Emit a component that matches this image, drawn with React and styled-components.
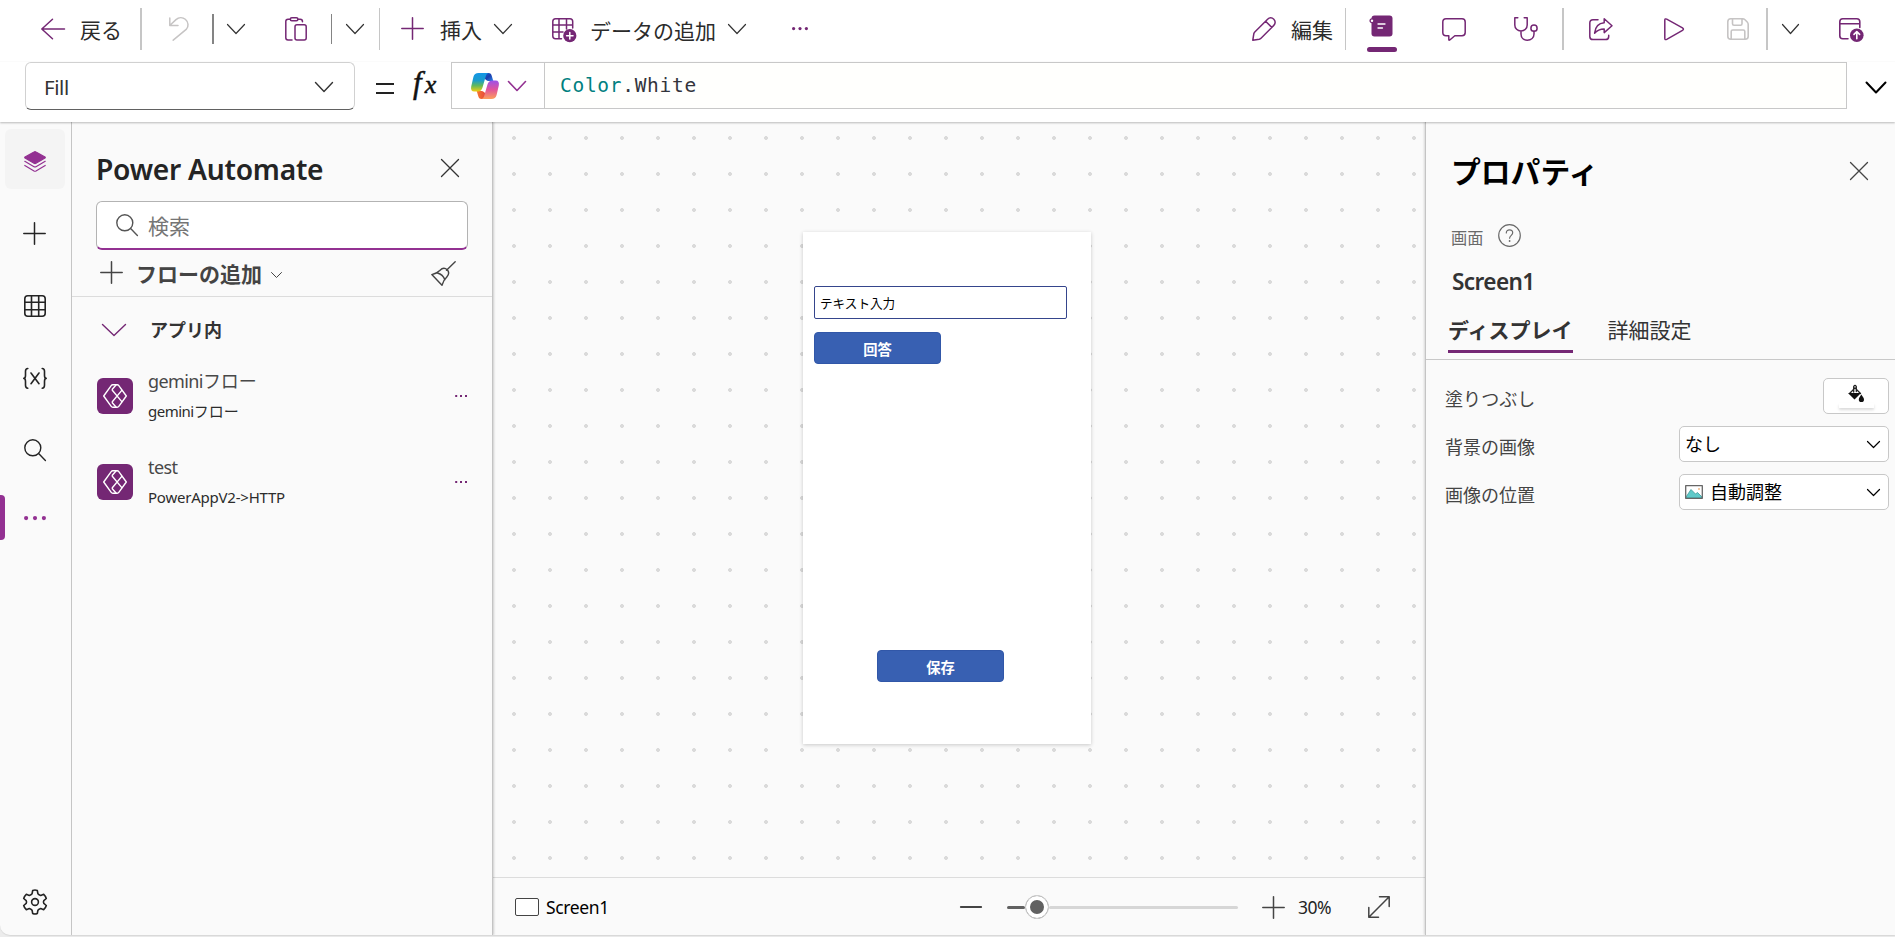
import React, { useState } from 'react'
import styled, { createGlobalStyle, css } from 'styled-components'

const purple = '#742774'
const brightPurple = '#933192'

const GlobalStyle = createGlobalStyle`
  * { box-sizing: border-box; }
  body {
    margin: 0;
    background: #ececec;
    font-family: 'Noto Sans', 'Noto Sans CJK JP', sans-serif;
    color: #242424;
  }
  button, input { font-family: inherit; color: inherit; }
`

///// LAYOUT /////

const Page = styled.div`
  width: 1895px;
  height: 937px;
  overflow: hidden;
  display: flex;
  flex-direction: column;
`

const Header = styled.header`
  position: relative;
  z-index: 2;
  flex: none;
  height: 122px;
  background: #fff;
  box-shadow: 0 1px 2px rgba(0, 0, 0, 0.26);
`

const Toolbar = styled.div`
  display: flex;
  height: 62px;
  border-bottom: 1px solid #fbfbfb;
`

const FormulaRow = styled.div`
  display: flex;
  height: 60px;
  padding-left: 25px;
`

const Body = styled.div`
  flex: none;
  height: 813px;
  display: flex;
  background: #fafafa;
  border-bottom-left-radius: 10px;
  overflow: hidden;
  box-shadow: 0 1px 1px #d8d8d8;
`

///// TOOLBAR PARTS /////

const Svg = styled.svg`
  display: block;
  flex: none;
  fill: none;
  stroke: currentColor;
  stroke-width: ${pr => pr.$stroke || 1.3};
  stroke-linecap: round;
  stroke-linejoin: round;
  overflow: visible;
`

const Tool = styled.button`
  display: flex;
  align-items: flex-start;
  height: 61px;
  padding: ${pr => pr.$top || 17}px 0 0;
  margin: 0 0 0 ${pr => pr.$gap || 0}px;
  border: 0;
  background: none;
  flex: none;
  color: ${pr => (pr.$disabled ? '#c6c4c4' : pr.$dark ? '#333' : purple)};
`

const ToolText = styled.span`
  width: ${pr => pr.$width}px;
  margin-left: ${pr => pr.$gap}px;
  margin-top: -3px;
  font-family: 'Noto Sans CJK JP', sans-serif;
  font-size: 21px;
  line-height: 30px;
  white-space: nowrap;
  text-align: left;
  color: #2b2b2b;
`

const Divider = styled.i`
  flex: none;
  width: ${pr => pr.$thick || 1}px;
  height: ${pr => (pr.$short ? 30 : 42)}px;
  margin: ${pr => (pr.$short ? 14 : 8)}px 0 0 ${pr => pr.$gap}px;
  background: ${pr => (pr.$short ? '#848484' : '#c6c6c6')};
`

const ActiveTool = styled.div`
  flex: none;
  width: 30px;
  height: 37px;
  margin: 15px 0 0 21px;
  padding-left: 3px;
  color: ${purple};

  &::after {
    content: '';
    display: block;
    height: 5px;
    margin: 10px 0 0 -3px;
    border-radius: 2.5px;
    background: ${purple};
  }
`

///// FORMULA BAR PARTS /////

const PropertySelect = styled.div`
  display: flex;
  align-items: center;
  justify-content: space-between;
  width: 330px;
  height: 48px;
  padding: 2px 21px 0 18px;
  border: 1px solid #d1d1d1;
  border-bottom-color: #616161;
  border-radius: 6px;
  font-size: 20.4px;
  letter-spacing: -0.4px;
  color: #333;
`

const Equals = styled.div`
  width: 18px;
  height: 11px;
  margin: 21px 0 0 21px;
  border-top: 2.5px solid #222;
  border-bottom: 2.5px solid #222;
`

const Fx = styled.div`
  width: 38px;
  margin-left: 19px;
  font: italic 31px/32px 'Liberation Serif', serif;
  padding-top: 5px;
  color: #111;
  white-space: nowrap;
  -webkit-text-stroke: 0.5px #111;

  span { font-size: 26px; margin-left: 3px; }
`

const CopilotButton = styled.div`
  display: flex;
  align-items: center;
  width: 94px;
  height: 47px;
  padding-left: 19px;
  border: 1px solid #c8c8c8;
  color: ${brightPurple};
`

const FormulaInput = styled.div`
  width: 1303px;
  height: 47px;
  margin-left: -1px;
  padding: 8px 0 0 15px;
  border: 1px solid #c8c8c8;
  background: #fffffd;
  font: 19.5px/30px 'DejaVu Sans Mono', monospace;
  letter-spacing: 0.7px;
  white-space: pre;
  color: #33343c;

  b { font-weight: normal; color: #008080; }
`

const Expand = styled.div`
  padding: 20px 0 0 19px;
  color: #000;
`

///// LEFT RAIL /////

const Rail = styled.nav`
  display: flex;
  flex-direction: column;
  flex: none;
  width: 72px;
  padding: 7px 0 0 5px;
  border-right: 1px solid #c8c8c8;
`

const RailItem = styled.div`
  position: relative;
  display: flex;
  align-items: center;
  justify-content: center;
  width: 60px;
  height: 60px;
  margin-bottom: 12px;
  padding: ${pr => (pr.$raised ? '0 0 2px' : pr.$nudge ? '4px 1px 0 0' : '6px 0 0')};
  border-radius: 6px;
  color: ${pr => (pr.$active ? brightPurple : '#242424')};
  ${pr => pr.$selected && css`background: #f4f4f4;`}
  ${pr => pr.$bottom && css`margin: auto 0 0; height: 66px; padding: 0;`}
`

const Marker = styled.span`
  position: absolute;
  left: -5px;
  top: 6px;
  width: 5px;
  height: 45px;
  border-radius: 0 4px 4px 0;
  background: ${brightPurple};
`

///// FLOW PANEL /////

const FlowPanel = styled.section`
  flex: none;
  width: 421px;
  border-right: 1px solid #c4c4c4;
  position: relative;
  z-index: 1;
  box-shadow: 1px 0 2px rgba(0, 0, 0, 0.18);
`

const PanelHead = styled.div`
  display: flex;
  justify-content: space-between;
  height: 79px;
  padding: 37px 33px 0 24px;
  color: #333;
`

const PanelTitle = styled.h2`
  margin: -11px 0 0;
  font-size: 28.2px;
  line-height: 42px;
  font-weight: 600;
  letter-spacing: -0.25px;
  color: #242424;
  white-space: nowrap;
`

const SearchBox = styled.div`
  display: flex;
  align-items: center;
  width: 372px;
  height: 49px;
  margin: 0 0 -1px 24px;
  padding-left: 19px;
  background: #fff;
  border: 1px solid #b3b3b3;
  border-bottom: 2px solid ${brightPurple};
  border-radius: 6px;
  color: #555;

  input {
    width: 300px;
    margin-left: 10px;
    padding: 0;
    border: 0;
    outline: 0;
    background: none;
    font: 21px 'Noto Sans CJK JP', sans-serif;
  }
  input::placeholder { color: #757575; opacity: 1; }
`

const AddFlow = styled.div`
  display: flex;
  align-items: center;
  height: 48px;
  padding: 0 36px 0 28px;
  border-bottom: 1px solid #dcdcdc;
  color: #444;

  strong {
    margin: 1px 0 0 13px;
    font-family: 'Noto Sans CJK JP', sans-serif;
    font-size: 21px;
    font-weight: 600;
    letter-spacing: 0;
  }
  svg:nth-of-type(2) { margin: 5px 0 0 9px; }
  svg:last-child { margin: 1px 0 0 auto; }
`

const GroupHead = styled.div`
  display: flex;
  align-items: center;
  height: 65px;
  padding: 0 0 0 30px;
  color: ${purple};

  strong {
    margin: -1px 0 0 24px;
    font-family: 'Noto Sans CJK JP', sans-serif;
    font-size: 18px;
    font-weight: 600;
    color: #333;
  }
`

const FlowItem = styled.div`
  display: flex;
  height: 86px;
  padding: 16px 25px 0;
  color: ${purple};
`

const FlowLogo = styled.div`
  display: flex;
  align-items: center;
  justify-content: center;
  width: 36px;
  height: 36px;
  border-radius: 6px;
  background: ${purple};
  color: #fff;
`

const FlowText = styled.div`
  flex: 1;
  margin: -10px 0 0 15px;
  white-space: nowrap;

  p { margin: 0; }
  p:first-child { font-size: 18px; line-height: 26px; color: #484848; }
  p:last-child { margin-top: 4px; font-size: 15px; line-height: 26px; color: #2c2c2c; }
`

const Latin = styled.span`
  letter-spacing: ${pr => pr.$track}px;
`

///// CANVAS /////

const Center = styled.main`
  display: flex;
  flex-direction: column;
  flex: none;
  width: 932px;
`

const Canvas = styled.div`
  position: relative;
  height: 755px;
  background-image: radial-gradient(circle, #dadada 1.7px, transparent 2.2px);
  background-size: 36px 36px;
  background-position: 3px -2px;
`

const AppScreen = styled.div`
  position: absolute;
  left: 310px;
  top: 110px;
  width: 288px;
  height: 512px;
  background: #fff;
  box-shadow: 0 1px 4px rgba(0, 0, 0, 0.2);
`

const AppInput = styled.div`
  position: absolute;
  left: 11px;
  top: 54px;
  width: 253px;
  height: 33px;
  padding-left: 5px;
  border: 1px solid #35458c;
  border-radius: 2px;
  font: 12.6px/31px 'Noto Sans CJK JP', sans-serif;
  color: #000;
`

const AppButton = styled.button`
  position: absolute;
  left: ${pr => pr.$x}px;
  top: ${pr => pr.$y}px;
  width: 127px;
  height: 32px;
  padding: ${pr => pr.$pad || 1}px 0 0;
  border: 1px solid #3157a8;
  border-radius: 4px;
  background: #3860b2;
  color: #fff;
  font: bold 14.3px/28px 'Noto Sans CJK JP', sans-serif;
`

const StatusBar = styled.div`
  display: flex;
  align-items: center;
  height: 58px;
  padding: 1px 0 0 22px;
  border-top: 1px solid #dcdcdc;
  font-size: 17.5px;
  color: #444;
`

const ScreenThumb = styled.span`
  width: 24px;
  height: 18px;
  border: 1.5px solid #444;
  border-radius: 2px;
  background: #fff;
`

const ScreenName = styled.span`
  width: 414px;
  margin-left: 7px;
  letter-spacing: -0.35px;
  color: #000;
`

const Slider = styled.div`
  display: flex;
  align-items: center;
  width: 231px;
  height: 24px;
  margin: 0 24px 0 25px;
`

const Track = styled.i`
  height: 3px;
  border-radius: 2px;
  background: ${pr => (pr.$done ? '#616161' : '#d6d6d6')};
  flex: ${pr => (pr.$done ? '0 0 18px' : '1')};
`

const Thumb = styled.i`
  width: 24px;
  height: 24px;
  border: 1px solid #d1d1d1;
  border-radius: 50%;
  background: #616161;
  box-shadow: inset 0 0 0 4px #fff;
`

const Percent = styled.span`
  width: 70px;
  margin-left: 13px;
  letter-spacing: -0.5px;
  color: #242424;
`

///// PROPERTIES PANEL /////

const Properties = styled.aside`
  flex: 1;
  border-left: 1px solid #c4c4c4;
  position: relative;
  z-index: 1;
  box-shadow: -1px 0 2px rgba(0, 0, 0, 0.14);
  font-family: 'Noto Sans CJK JP', sans-serif;
`

const PropsHead = styled.div`
  display: flex;
  justify-content: space-between;
  height: 98px;
  padding: 40px 27px 0 25px;
  color: #444;

  h2 {
    margin: -14px 0 0;
    font-size: 29.8px;
    line-height: 44px;
    font-weight: 700;
    color: #000;
  }
`

const ControlType = styled.div`
  display: flex;
  align-items: center;
  height: 30px;
  padding-left: 25px;
  font-size: 16.2px;
  color: #6a6a6a;

  span { margin: 4px 15px 0 0; }
`

const ControlName = styled.div`
  height: 55px;
  padding: 15px 0 0 26px;
  font: 600 22.6px/34px 'Noto Sans', sans-serif;
  letter-spacing: -0.6px;
  color: #333;
`

const Tabs = styled.div`
  display: flex;
  height: 55px;
  padding-left: 22px;
  border-bottom: 1px solid #c8c8c8;
`

const Tab = styled.div`
  height: 48px;
  margin-right: 35px;
  padding-top: 10px;
  font-size: 21px;
  line-height: 29px;
  font-weight: ${pr => (pr.$active ? 600 : 400)};
  border-bottom: 3px solid ${pr => (pr.$active ? purple : 'transparent')};
  color: #333;
`

const PropertyList = styled.div`
  padding: 18px 6px 0 19px;
`

const PropertyRow = styled.div`
  display: flex;
  justify-content: space-between;
  height: 48px;
  font-size: 18px;
  line-height: 26px;
  color: #444;

  > span { padding-top: 7px; }
`

const Dropdown = styled.div`
  display: flex;
  align-items: center;
  width: 210px;
  height: 36px;
  padding: 0 8px 0 5px;
  border: 1px solid #c8c8c8;
  border-radius: 5px;
  background: #fff;
  color: #000;

  span { margin: -3px auto 0 0; }
  svg + span { margin-left: 7px; }
`

const FillButton = styled.div`
  display: flex;
  flex-direction: column;
  align-items: center;
  width: 66px;
  height: 36px;
  padding-top: 5px;
  border: 1px solid #c8c8c8;
  border-radius: 5px;
  background: #fff;
`

const Swatch = styled.i`
  width: 35px;
  height: 5px;
  margin-top: 1px;
  background: #fff;
  box-shadow: 0 2px 3px rgba(0, 0, 0, 0.15);
`

///// ICONS /////

const Chevron = ({ w = 17, h = 9, stroke = 1.2 }) => (
  <Svg width={w} height={h} $stroke={stroke}>
    <path d={`M.5 .5L${w / 2} ${h - 0.5}L${w - 0.5} .5`} />
  </Svg>
)

const Plus = () => (
  <Svg width="23" height="23" $stroke={1.5}><path d="M11.5 .8V22.2M.8 11.5H22.2" /></Svg>
)

const Close = () => (
  <Svg width="18" height="18" $stroke={1.3}><path d="M.5 .5L17.5 17.5M17.5 .5L.5 17.5" /></Svg>
)

const Search = () => (
  <Svg width="22" height="22" $stroke={1.4}>
    <circle cx="8.8" cy="8.8" r="8" /><path d="M14.6 14.6L21.4 21.4" />
  </Svg>
)

const Dots = ({ w = 14, r = 1.5 }) => (
  <Svg width={w} height={r * 2}>
    {[r, w / 2, w - r].map(x => (
      <circle key={x} cx={x} cy={r} r={r} fill="currentColor" stroke="none" />
    ))}
  </Svg>
)

const AutomateLogo = () => (
  <Svg width="24" height="24" $stroke={1.4}>
    <path d="M10.5 .8H9.8Q8.8 .8 8.2 1.6L.7 12L8.2 22.4Q8.8 23.2 9.8 23.2H14.2Q15.2 23.2 15.8 22.4L23.3 12L15.8 1.6Q15.2 .8 14.2 .8H10.5" />
    <path d="M13 1L9.3 5.2V6.2L18.8 17.6M13 23L9.3 18.8V17.8L18.8 6.4" />
  </Svg>
)

const Copilot = () => (
  <Svg width="28" height="26" viewBox="0 0 28 26">
    <defs>
      <linearGradient id="cpBlue" x1="0" y1="0" x2="0" y2="1">
        <stop offset="0" stopColor="#1496e6" /><stop offset=".4" stopColor="#1a9ccd" />
        <stop offset=".68" stopColor="#62b95c" /><stop offset="1" stopColor="#f5ce10" />
      </linearGradient>
      <linearGradient id="cpPink" x1="0" y1="0" x2="0" y2="1">
        <stop offset="0" stopColor="#9b52ea" /><stop offset=".5" stopColor="#e2559a" />
        <stop offset="1" stopColor="#fda05a" />
      </linearGradient>
      <linearGradient id="cpNavy" x1="0" y1="0" x2="1" y2="1">
        <stop offset="0" stopColor="#1268d8" /><stop offset=".5" stopColor="#1c3fae" />
        <stop offset="1" stopColor="#2a86e8" />
      </linearGradient>
      <linearGradient id="cpRed" x1="0" y1="0" x2="1" y2="0">
        <stop offset="0" stopColor="#f6792f" /><stop offset="1" stopColor="#e3413c" />
      </linearGradient>
    </defs>
    <g stroke="none">
      <path fill="url(#cpNavy)" d="M12 0H17.5C19.5 0 20.3 1.2 20.8 3L22.3 8H18C15 8 13 6 12 0Z" />
      <path fill="url(#cpRed)" d="M16 26H10.5C8.5 26 7.7 24.8 7.2 23L5.7 18H10C13 18 15 20 16 26Z" />
      <path fill="url(#cpBlue)" d="M7.5 0H17.5C15.9 .3 15.2 1.8 14.7 3.5L11.6 14.2C10.8 17 9.5 18.6 6.8 18.6H3.3C.6 18.6-.4 16.6 .2 13.6L2.4 4C3 1.5 4.8 0 7.5 0Z" />
      <path fill="url(#cpPink)" d="M20.5 26H10.5C12.1 25.7 12.8 24.2 13.3 22.5L16.4 11.8C17.2 9 18.5 7.4 21.2 7.4H24.7C27.4 7.4 28.4 9.4 27.8 12.4L25.6 22C25 24.5 23.2 26 20.5 26Z" />
    </g>
  </Svg>
)

const Grid = () => (
  <Svg width="22" height="22" $stroke={1.6}>
    <rect x=".8" y=".8" width="20.4" height="20.4" rx="3" />
    <path d="M7.5 1V21M14.7 1V21M1 7.3H21M1 14.7H21" />
  </Svg>
)

const railItems = [
  { id: 'plus', icon: <Plus />, nudge: true },
  { id: 'data', icon: <Grid /> },
  {
    id: 'variables',
    icon: (
      <Svg width="24" height="21" $stroke={1.6}>
        <path d="M4.8 .5C2.8 .5 2.5 1.6 2.5 3.3V7.5C2.5 9.5 2 10.3 .8 10.4C2 10.5 2.5 11.4 2.5 13.4V17.3C2.5 19 2.8 20.2 4.8 20.2M19.2 .5C21.2 .5 21.5 1.6 21.5 3.3V7.5C21.5 9.5 22 10.3 23.2 10.4C22 10.5 21.5 11.4 21.5 13.4V17.3C21.5 19 21.2 20.2 19.2 20.2M8 5L16 15.7M16 5L8 15.7" />
      </Svg>
    ),
  },
  { id: 'search', icon: <Search /> },
]

const initialFlows = [
  { id: 1, latin: 'gemini', kana: 'フロー', subLatin: 'gemini', subKana: 'フロー', subTrack: -0.5 },
  { id: 2, latin: 'test', kana: '', subLatin: 'PowerAppV2->HTTP', subKana: '', subTrack: -0.22 },
]

export default function App () {
  const [flows] = useState(initialFlows)
  const [searchValue, setSearchValue] = useState('')

  const onChange = evt => {
    setSearchValue(evt.target.value)
  }

  return (
    <Page>
      <GlobalStyle />
      <Header>
        <Toolbar>
          <Tool $gap={41}>
            <Svg width="24" height="24" $stroke={1.5}><path d="M11.5 2.2L.8 12L11.5 21.8M1 12H23.5" /></Svg>
            <ToolText $gap={15} $width={43}>戻る</ToolText>
          </Tool>
          <Divider $gap={17} $thick={2} />
          <Tool $gap={27} $disabled>
            <Svg width="20" height="24" $stroke={1.5}>
              <path d="M.8 1V8.5H9M1 8.3L7 2.6C9.7 .2 13.6 0 16.3 2.3C19.5 5 20 9.5 17.2 12.4L4.2 23.2" />
            </Svg>
          </Tool>
          <Divider $gap={23} $thick={2} $short />
          <Tool $gap={13} $top={24} $dark><Chevron w={18} h={10} /></Tool>
          <Tool $gap={40}>
            <Svg width="22" height="24" $stroke={1.5}>
              <path d="M5.3 2.3H3Q.8 2.3 .8 4.5V20.8Q.8 23 3 23H7M12.8 2.3H15.2Q17.5 2.3 17.5 4.8" />
              <rect x="5.3" y=".8" width="7.6" height="3" rx="1.5" />
              <rect x="10" y="7.8" width="11.2" height="15.2" rx="2" />
            </Svg>
          </Tool>
          <Divider $gap={24} $short />
          <Tool $gap={14} $top={24} $dark><Chevron w={18} h={10} /></Tool>
          <Divider $gap={15} />
          <Tool $gap={21}>
            <Plus />
            <ToolText $gap={16} $width={43}>挿入</ToolText>
          </Tool>
          <Tool $gap={11} $top={24} $dark><Chevron w={18} h={10} /></Tool>
          <Tool $gap={40} $top={18}>
            <Svg width="25" height="24" $stroke={1.5}>
              <path d="M20.7 10V3.5Q20.7 .8 18 .8H3.5Q.8 .8 .8 3.5V18Q.8 20.7 3.5 20.7H9.5M7 1V20.5M14.5 1V11M1 7H20.5M1 14H11" />
              <circle cx="17.8" cy="17.7" r="6.6" fill="currentColor" stroke="none" />
              <path stroke="#fff" d="M17.8 14.5V20.9M14.6 17.7H21" />
            </Svg>
            <ToolText $gap={13} $width={126}>データの追加</ToolText>
          </Tool>
          <Tool $gap={12} $top={24} $dark><Chevron w={18} h={10} /></Tool>
          <Tool $gap={46} $top={27}><Dots w={16} r={1.6} /></Tool>

          <Tool $gap={444}>
            <Svg width="24" height="24" $stroke={1.5}>
              <path d="M21.8 2.2C20 .4 17.4 .4 15.6 2.2L2.8 15C2.3 15.5 2 16 1.8 16.8L.8 23.2L7.2 22.2C8 22 8.5 21.7 9 21.2L21.8 8.4C23.6 6.6 23.6 4 21.8 2.2ZM13.6 4.2L19.8 10.4" />
            </Svg>
            <ToolText $gap={15} $width={42}>編集</ToolText>
          </Tool>
          <Divider $gap={12} />
          <ActiveTool>
            <Svg width="23" height="22" viewBox="0 0 23 22">
              <rect x="1.5" y=".5" width="21" height="21" rx="3" fill="currentColor" stroke="none" />
              <circle cx="2" cy="5.8" r="1.9" fill="#fff" />
              <path stroke="#fff" d="M8 9H15M8 13H12.5" />
            </Svg>
          </ActiveTool>
          <Tool $gap={45} $top={18}>
            <Svg width="24" height="23" $stroke={1.5}>
              <path d="M4 .8H20Q23.2 .8 23.2 4V14.5Q23.2 17.7 20 17.7H12.8L7.8 22Q6.8 22.7 6.8 21.3V17.7H4Q.8 17.7 .8 14.5V4Q.8 .8 4 .8Z" />
            </Svg>
          </Tool>
          <Tool $gap={48}>
            <Svg width="24" height="24" $stroke={1.5}>
              <path d="M3.8 .8H.8V8C.8 11.5 3.5 14 7 14S13.2 11.5 13.2 8V.8H10.2M7 14V17C7 20.7 9.5 23.2 13.3 23.2S20 20.7 20 17V14.3" />
              <circle cx="20" cy="11.2" r="3.1" />
            </Svg>
          </Tool>
          <Divider $gap={24} $thick={2} />
          <Tool $gap={25} $top={18}>
            <Svg width="24" height="23" $stroke={1.5}>
              <path d="M9 1.8H4Q.8 1.8 .8 5V18.4Q.8 21.6 4 21.6H16.5Q19.7 21.6 19.7 18.4V17.3" />
              <path d="M15.2 .8L23 7.8L15.2 14.6V10.9C11 10.9 8.3 12 5.6 15.2C6.2 9.5 9.3 5.2 15.2 4.8Z" />
            </Svg>
          </Tool>
          <Tool $gap={51} $top={18}>
            <Svg width="20" height="23" $stroke={1.5}>
              <path d="M.8 2.3Q.8 .2 2.7 1.2L18.5 9.8Q20.4 11.1 18.5 12.3L2.7 21.3Q.8 22.3 .8 20.2Z" />
            </Svg>
          </Tool>
          <Tool $gap={43} $top={18} $disabled>
            <Svg width="22" height="22" $stroke={1.6}>
              <path d="M3.8 .8H15.5Q17 .8 18 1.8L20.2 4Q21.2 5 21.2 6.5V18.2Q21.2 21.2 18.2 21.2H3.8Q.8 21.2 .8 18.2V3.8Q.8 .8 3.8 .8ZM5.5 1V5.7Q5.5 7.2 7 7.2H13.5Q15 7.2 15 5.7V1M4.2 21V13.5Q4.2 12 5.7 12H16.3Q17.8 12 17.8 13.5V21" />
            </Svg>
          </Tool>
          <Divider $gap={17} $thick={2} />
          <Tool $gap={14} $top={24} $dark><Chevron w={17} h={10} /></Tool>
          <Tool $gap={40} $top={18}>
            <Svg width="25" height="24" $stroke={1.6}>
              <path d="M20.8 9.5V3.8Q20.8 .8 17.8 .8H3.8Q.8 .8 .8 3.8V17.8Q.8 20.8 3.8 20.8H9M1 5.8H20.6" />
              <circle cx="17.8" cy="17.2" r="6.8" fill="currentColor" stroke="none" />
              <path stroke="#fff" d="M17.8 20.8V13.8M15 16.4L17.8 13.6L20.6 16.4" />
            </Svg>
          </Tool>
        </Toolbar>

        <FormulaRow>
          <PropertySelect>Fill<Chevron w={18} h={10} stroke={1.4} /></PropertySelect>
          <Equals />
          <Fx>f<span>x</span></Fx>
          <CopilotButton>
            <Copilot />
            <Svg width="27" height="10" $stroke={1.6}><path d="M9.5 .5L18 9.5L26.5 .5" /></Svg>
          </CopilotButton>
          <FormulaInput><b>Color</b>.White</FormulaInput>
          <Expand><Chevron w={20} h={11} stroke={2} /></Expand>
        </FormulaRow>
      </Header>

      <Body>
        <Rail>
          <RailItem $selected $active>
            <Svg width="22" height="22" $stroke={1.2}>
              <path fill="currentColor" d="M10 1Q11 .4 12 1L21 6Q21.6 6.5 21 7L12 12.3Q11 12.9 10 12.3L1 7Q.4 6.5 1 6Z" />
              <path d="M.8 10.3L10 15.7Q11 16.2 12 15.7L21.2 10.3M.8 14.5L10 20Q11 20.5 12 20L21.2 14.5" />
            </Svg>
          </RailItem>
          {railItems.map(item => (
            <RailItem key={item.id} $nudge={item.nudge}>{item.icon}</RailItem>
          ))}
          <RailItem $active $raised>
            <Marker />
            <Dots w={22} r={2.1} />
          </RailItem>
          <RailItem $bottom>
            <Svg width="24" height="26" viewBox="0 0 24 26" $stroke={1.6}>
              <path d="M9.7 1.5Q12 .6 14.3 1.5L14.9 4.7Q15.3 5.5 16.6 6L17.7 6.4L20.7 5.3Q22.6 7 23.3 9.5L20.8 11.6Q20.1 13 20.8 14.4L23.3 16.5Q22.6 19 20.7 20.7L17.7 19.6L16.6 20Q15.3 20.5 14.9 21.3L14.3 24.5Q12 25.4 9.7 24.5L9.1 21.3Q8.7 20.5 7.4 20L6.3 19.6L3.3 20.7Q1.4 19 .7 16.5L3.2 14.4Q3.9 13 3.2 11.6L.7 9.5Q1.4 7 3.3 5.3L6.3 6.4L7.4 6Q8.7 5.5 9.1 4.7Z" />
              <circle cx="12" cy="13" r="3.4" />
            </Svg>
          </RailItem>
        </Rail>

        <FlowPanel>
          <PanelHead>
            <PanelTitle>Power Automate</PanelTitle>
            <Close />
          </PanelHead>
          <SearchBox>
            <Search />
            <input
              value={searchValue}
              onChange={onChange}
              name='search'
              type='text'
              placeholder='検索'
            />
          </SearchBox>
          <AddFlow>
            <Plus />
            <strong>フローの追加</strong>
            <Chevron w={11} h={6} stroke={1} />
            <Svg width="25" height="25" $stroke={1.4}>
              <path d="M24.2 .8L15.5 9.2M8.8 9.4C11.3 7 14.2 7 16.2 8.7C18 10.5 18 13.4 15.8 16M8.8 9.4Q5.5 12.5 .8 13.6L11 24.2Q12.5 19 15.8 16M6.5 12Q12 13.5 13.8 18.8" />
            </Svg>
          </AddFlow>
          <GroupHead>
            <Chevron w={24} h={12} stroke={1.4} />
            <strong>アプリ内</strong>
          </GroupHead>
          {flows.map(flow => (
            <FlowItem key={flow.id}>
              <FlowLogo><AutomateLogo /></FlowLogo>
              <FlowText>
                <p><Latin $track={-0.6}>{flow.latin}</Latin>{flow.kana}</p>
                <p><Latin $track={flow.subTrack}>{flow.subLatin}</Latin>{flow.subKana}</p>
              </FlowText>
              <Svg width="12" height="36">
                {[1, 5.8, 10.8].map(x => (
                  <rect key={x} x={x - 0.8} y="17" width="2" height="2" fill="currentColor" stroke="none" />
                ))}
              </Svg>
            </FlowItem>
          ))}
        </FlowPanel>

        <Center>
          <Canvas>
            <AppScreen>
              <AppInput>テキスト入力</AppInput>
              <AppButton $x={11} $y={100} $pad={2}>回答</AppButton>
              <AppButton $x={74} $y={418}>保存</AppButton>
            </AppScreen>
          </Canvas>
          <StatusBar>
            <ScreenThumb />
            <ScreenName>Screen1</ScreenName>
            <Svg width="22" height="2" $stroke={1.8}><path d="M.8 1H21.2" /></Svg>
            <Slider>
              <Track $done />
              <Thumb />
              <Track />
            </Slider>
            <Plus />
            <Percent>30%</Percent>
            <Svg width="22" height="22" $stroke={1.5}>
              <path d="M.8 21.2L21.2 .8M11.5 .8H21.2V10.5M.8 11.5V21.2H10.5" />
            </Svg>
          </StatusBar>
        </Center>

        <Properties>
          <PropsHead>
            <h2>プロパティ</h2>
            <Close />
          </PropsHead>
          <ControlType>
            <span>画面</span>
            <Svg width="23" height="23" $stroke={1.2}>
              <circle cx="11.5" cy="11.5" r="10.8" />
              <path d="M8.3 9C8.3 7 9.6 5.8 11.5 5.8S14.7 7 14.7 8.8C14.7 11.2 11.6 11.5 11.6 14.2" />
              <circle cx="11.6" cy="17" r=".9" fill="currentColor" stroke="none" />
            </Svg>
          </ControlType>
          <ControlName>Screen1</ControlName>
          <Tabs>
            <Tab $active>ディスプレイ</Tab>
            <Tab>詳細設定</Tab>
          </Tabs>
          <PropertyList>
            <PropertyRow>
              <span>塗りつぶし</span>
              <FillButton>
                <Svg width="16" height="18" stroke="none">
                  <path d="M1.5 9.5L7 4L12.5 9.5M5.7 8V2.5Q7 .3 8.3 2.5V7.5" stroke="#222" />
                  <path d="M0 9H13L6.5 15.5ZM13.3 10.5Q16 14 16 15.5A2.6 2.6 0 0 1 10.8 15.5Q10.8 14 13.3 10.5Z" fill="#111" stroke="none" />
                </Svg>
                <Swatch />
              </FillButton>
            </PropertyRow>
            <PropertyRow>
              <span>背景の画像</span>
              <Dropdown><span>なし</span><Chevron w={13} h={7} /></Dropdown>
            </PropertyRow>
            <PropertyRow>
              <span>画像の位置</span>
              <Dropdown>
                <Svg width="18" height="14" viewBox="0 0 18 14">
                  <path d="M1 12L6 4.5L10.5 9L12.5 7.5L17 12V13H1Z" fill="#5fc9c9" stroke="#3b9a9a" strokeWidth=".8" />
                  <rect x=".7" y=".7" width="16.6" height="12.6" stroke="#666" />
                  <rect x="13" y="3" width="2" height="2" fill="#f3c9a5" stroke="none" />
                </Svg>
                <span>自動調整</span>
                <Chevron w={13} h={7} />
              </Dropdown>
            </PropertyRow>
          </PropertyList>
        </Properties>
      </Body>
    </Page>
  )
}
